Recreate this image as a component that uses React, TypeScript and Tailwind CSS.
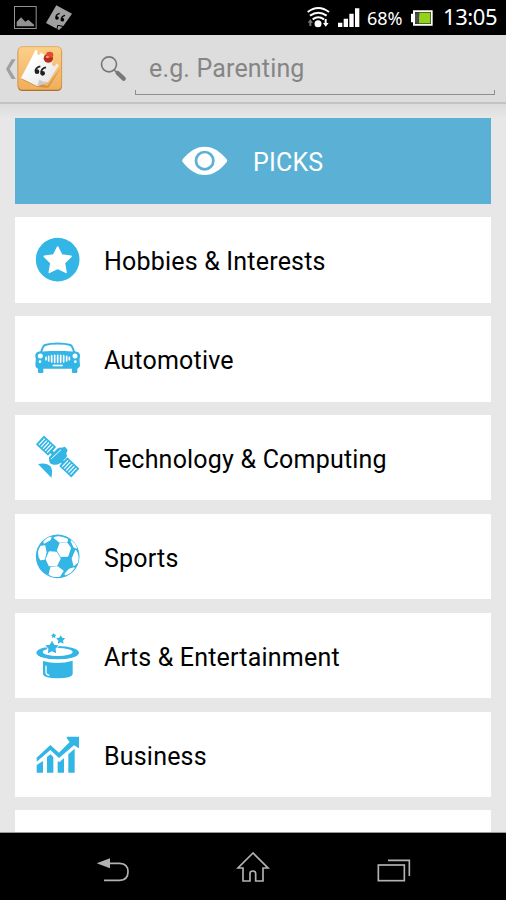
import React from 'react';

const STAR = 'M0 -10 L3.3 -4 L10 -2.9 L5.3 2 L6.3 9 L0 5.8 L-6.3 9 L-5.3 2 L-10 -2.9 L-3.3 -4 Z';

const StarIcon = () => (
  <svg viewBox="105 52 135 135" className="h-[45px] w-[45px]">
    <circle cx="173" cy="120" r="65.5" fill="#33b5e5" />
    <path
      d="M173 82 L185 106 L213 110 L193 130 L198 158 L173 146 L148 158 L153 130 L133 110 L161 106 Z"
      fill="#fff"
      stroke="#fff"
      strokeWidth="5"
      strokeLinejoin="round"
    />
  </svg>
);

const CarIcon = () => (
  <svg viewBox="45 20 135 135" className="h-[45px] w-[45px]">
    <path
      d="M63 72 C66 58 68 50 75 47 C95 41 131 41 151 47 C158 50 160 58 163 72"
      fill="none"
      stroke="#33b5e5"
      strokeWidth="6"
    />
    <path
      d="M62 66 C72 68 82 65 92 65 H134 C144 65 154 68 164 66 C178 67 181 75 180 82 C177 93 180 100 180 108 C180 113 176 116 172 118 V129 Q172 131 169 131 H159 Q156 131 156 128 V118 H70 V128 Q70 131 67 131 H57 Q54 131 54 128 V118 C49 116 46 112 46 107 C46 99 49 92 46 82 C45 74 49 67 62 66 Z"
      fill="#33b5e5"
    />
    <circle cx="61" cy="80" r="7.5" fill="#fff" />
    <circle cx="165" cy="80" r="7.5" fill="#fff" />
    <circle cx="60" cy="97" r="4" fill="#fff" />
    <circle cx="166" cy="97" r="4" fill="#fff" />
    <path
      d="M78 84 V91 M86 81 V95 M95 79 V98 M104 78 V99 M113 78 V99 M122 78 V99 M131 79 V98 M140 81 V95 M148 84 V91"
      stroke="#fff"
      strokeWidth="5"
      strokeLinecap="round"
    />
    <rect x="98" y="106" width="30" height="5" fill="#fff" />
  </svg>
);

const SatelliteIcon = () => (
  <svg viewBox="45 30 135 135" className="h-[45px] w-[45px]">
    <path d="M88 75 L140 122" stroke="#33b5e5" strokeWidth="10" />
    <g transform="translate(78 62) rotate(43)">
      <rect x="-25" y="-18" width="50" height="36" rx="2" fill="#33b5e5" />
      <path d="M-17 -13 V13 M-8.5 -13 V13 M0 -13 V13 M8.5 -13 V13 M17 -13 V13" stroke="#fff" strokeWidth="3.4" />
    </g>
    <g transform="translate(148 127) rotate(43)">
      <rect x="-25" y="-18" width="50" height="36" rx="2" fill="#33b5e5" />
      <path d="M-17 -13 V13 M-8.5 -13 V13 M0 -13 V13 M8.5 -13 V13 M17 -13 V13" stroke="#fff" strokeWidth="3.4" />
    </g>
    <path
      d="M87 97 L110 73 Q116 66 125 68 L135 65 L143 75 L139 85 Q143 93 138 99 L121 114 Q114 121 104 119 Q91 119 88 110 Z"
      fill="#33b5e5"
    />
    <path d="M93 102 L123 74" stroke="#fff" strokeWidth="3" />
    <path d="M54 117 C72 113 85 117 91 124 C97 132 98 143 94 158 Z" fill="#33b5e5" />
  </svg>
);

const BallIcon = () => (
  <svg viewBox="45 27 135 135" className="h-[45px] w-[45px]">
    <circle cx="113" cy="94" r="65.5" fill="#33b5e5" />
    <g fill="#fff" strokeLinejoin="round" stroke="#fff" strokeWidth="4">
      <path d="M88 81 L109 82 L120 101 L110 121 L88 122 L79 103 Z" />
      <path d="M120 56 L140 54 L151 69 L143 93 L123 94 L113 76 Z" />
      <path d="M103 38 Q120 31 142 43 L141 49 L119 51 Z" />
      <path d="M63 64 L74 63 L78 82 L73 102 L62 104 Q50 84 63 64 Z" />
      <path d="M93 127 L113 126 L129 138 L119 153 Q103 157 88 148 Z" />
      <path d="M167 77 Q177 90 172 112 L162 121 L157 101 Z" />
      <path d="M136 146 L148 133 L162 129 Q150 146 136 149 Z" />
      <path d="M72 51 Q81 39 93 37 L90 44 L73 54 Z" />
      <path d="M154 48 Q164 55 169 69 L162 66 Z" />
    </g>
  </svg>
);

const HatIcon = () => (
  <svg viewBox="45 38 135 135" className="h-[45px] w-[45px] overflow-visible">
    <ellipse cx="113" cy="97" rx="64" ry="20" fill="#33b5e5" />
    <ellipse cx="113" cy="95" rx="45" ry="12" fill="#fff" />
    <path d="M69 122 Q113 134 158 121 V162 Q155 174 113 174 Q72 174 69 162 Z" fill="#33b5e5" />
    <path d="M78 136 V158 Q80 164 88 165" fill="none" stroke="#fff" strokeWidth="4" />
    <g fill="#33b5e5">
      <path d={STAR} transform="translate(96 81) scale(2)" stroke="#fff" strokeWidth="2.5" paintOrder="stroke" />
      <path d={STAR} transform="translate(122 58) scale(1.35)" />
      <path d={STAR} transform="translate(101 46) scale(0.8)" />
    </g>
  </svg>
);

const ChartIcon = () => (
  <svg viewBox="45 20 135 135" className="h-[45px] w-[45px]">
    <path d="M50 97 L91 59 L117 82 L149 50 L140 38 V34 H177 V69 L162 60 L117 98 L91 74 L50 109 Z" fill="#33b5e5" />
    <path
      d="M50 119 L69 107 V142 H50 Z M81 95 L91 87 L100 95 V142 H81 Z M113 108 L119 110 L132 98 V142 H113 Z M145 87 L164 70 V142 H145 Z"
      fill="#33b5e5"
    />
  </svg>
);

const categories = [
  { name: 'Hobbies & Interests', icon: <StarIcon /> },
  { name: 'Automotive', icon: <CarIcon /> },
  { name: 'Technology & Computing', icon: <SatelliteIcon /> },
  { name: 'Sports', icon: <BallIcon /> },
  { name: 'Arts & Entertainment', icon: <HatIcon /> },
  { name: 'Business', icon: <ChartIcon /> },
];

const StatusBar = () => (
  <div className="flex h-[35px] shrink-0 items-center justify-between bg-black pl-[14px] pr-2 font-['Noto_Sans',sans-serif] text-white">
    <svg viewBox="42 0 180 105" className="h-[35px] w-[60px]">
      <rect x="43.5" y="19.5" width="65" height="66" fill="none" stroke="#929292" strokeWidth="3" />
      <path d="M50 79 V66 L63 52 L76 65 L85 59 L102 74 V79 Z" fill="#929292" />
      <path d="M169 16 L216 41 L190 78 L177 90 L138 69 Z" fill="#a0a0a0" />
      <path d="M171 88 L173 76 L189 79" fill="none" stroke="#000" strokeWidth="3" />
      <g fill="none" stroke="#000" strokeWidth="4">
        <path d="M179 40 Q168 43 168 52" />
        <path d="M195 46 Q184 49 184 58" />
      </g>
      <circle cx="171" cy="54" r="5.5" />
      <circle cx="187" cy="59" r="5.5" />
    </svg>
    <div className="flex items-center">
      <svg viewBox="51 0 159 105" className="h-[35px] w-[53px]">
        <g fill="none" stroke="#fff" strokeWidth="6">
          <path d="M53 36 Q85 12 117 36" />
          <path d="M60 47 Q85 29 110 47" />
          <path d="M68 58 Q85 46 102 58" />
        </g>
        <circle cx="84" cy="71" r="10.5" fill="#fff" />
        <path d="M61 57 L69 68 H64 V78 H58 V68 H53 Z" fill="#777" />
        <path d="M107 80 L99 69 H104 V57 H110 V69 H116 Z" fill="#fff" />
        <path d="M144 68 H157 V81 H144 Z M161 56 H174 V81 H161 Z M178 41 H191 V81 H178 Z M195 25 H208 V81 H195 Z" fill="#fff" />
      </svg>
      <span className="ml-[7px] w-[36px] whitespace-nowrap text-[18px] leading-[36px] tracking-[-0.1px]">68%</span>
      <svg viewBox="363 0 66 105" className="ml-2 h-[35px] w-[22px]">
        <path d="M369 31 H428 V77 H369 V67 H363 V41 H369 Z" fill="#fff" />
        <rect x="375" y="36" width="48" height="36" fill="#30362c" />
        <rect x="387" y="38" width="34" height="32" fill="#92d21b" />
        <path d="M375 41 L389 36 L385 72 L375 67 Z" fill="#4b5149" />
      </svg>
      <span className="mb-0.5 ml-[10px] w-[55px] whitespace-nowrap text-[22px] leading-[33px] tracking-[-0.4px]">13:05</span>
    </div>
  </div>
);

const AppIcon = () => (
  <svg viewBox="15 105 174 204" className="h-[68px] w-[58px]">
    <defs>
      <linearGradient id="board" x1="0" y1="0" x2="0" y2="1">
        <stop offset="0" stopColor="#fbd08a" />
        <stop offset="1" stopColor="#f1ae5a" />
      </linearGradient>
      <linearGradient id="paper" x1="0" y1="0" x2="1" y2="1">
        <stop offset="0.3" stopColor="#ffffff" />
        <stop offset="1" stopColor="#dedede" />
      </linearGradient>
    </defs>
    <path d="M35 178 H47 L29 207 L47 237 H35 L18 207 Z" fill="#a0a0a0" />
    <rect x="53" y="142" width="133" height="131" rx="14" fill="#a87036" />
    <rect x="54" y="140" width="131" height="129" rx="13" fill="url(#board)" stroke="#d99748" strokeWidth="2" />
    <path d="M62 237 L105 243 L142 259 L182 203 L177 213 L145 263 L112 261 Z" fill="#bb7c3a" opacity="0.6" />
    <path
      d="M107 149 L113 153 Q109 163 117 165 Q123 164 122 157 L159 183 Q153 193 160 199 Q168 199 168 190 L177 196 L145 246 L112 259 L63 234 Z"
      fill="url(#paper)"
    />
    <path d="M112 259 L118 239 Q130 248 145 246 Z" fill="#c9c9c9" />
    <g fill="none" stroke="#202020" strokeWidth="5">
      <path d="M121 199 Q107 202 106 213" />
      <path d="M138 202 Q124 205 123 218" />
    </g>
    <circle cx="111" cy="215" r="7" fill="#202020" />
    <circle cx="128" cy="220" r="7" fill="#202020" />
    <ellipse cx="145" cy="175" rx="14" ry="13" fill="#b92d14" />
    <ellipse cx="149" cy="164" rx="11" ry="9" fill="#e04c30" />
    <ellipse cx="142" cy="171" rx="5" ry="3" fill="#f4a291" />
  </svg>
);

const Header = () => (
  <div className="flex h-[69px] shrink-0 items-start border-b-2 border-[#c3c3c3] bg-[#dddddd] pl-[5px]">
    <AppIcon />
    <svg viewBox="300 105 81 204" className="ml-[37px] h-[68px] w-[27px]">
      <circle cx="327" cy="193" r="22.5" fill="none" stroke="#777" strokeWidth="5" />
      <path d="M343 210 L352 219" stroke="#777" strokeWidth="5" />
      <path d="M353 219 L371 236" stroke="#777" strokeWidth="13" strokeLinecap="round" />
    </svg>
    <div className="ml-2 flex h-[60px] w-[360px] flex-col">
      <div className="h-[55px] pl-[14px] pt-[17px] font-['Roboto',sans-serif] text-[25px] leading-[34px] tracking-[0.16px] text-[#858585]">
        <span>e.g. Parenting</span>
      </div>
      <div className="h-[5px] border-x border-b border-[#8d8d8d]" />
    </div>
  </div>
);

const NavBar = () => (
  <div className="h-[68px] shrink-0 border-t border-[#999] bg-black">
    <svg viewBox="0 96 1518 201" className="h-[67px] w-[506px]" fill="none" stroke="#b2b2b2" strokeWidth="5">
      <path d="M330 187 H359 Q384 188 384 212 Q384 237 359 238 H312" />
      <path d="M290 187 L330 172 V202 Z" fill="#b2b2b2" stroke="none" />
      <path d="M759 156 L714 201 H729 V240 H750 V217 Q750 210 758 210 Q767 210 767 217 V240 H789 V201 H804 Z" />
      <rect x="1135" y="192" width="78" height="47" />
      <path d="M1164 178 H1228 V225" />
    </svg>
  </div>
);

export default function App() {
  return (
    <div className="flex h-[900px] w-[506px] flex-col overflow-hidden bg-[#e7e7e7] font-['Roboto',sans-serif]">
      <StatusBar />
      <Header />
      <div className="flex min-h-0 flex-1 flex-col gap-[13.3px] overflow-hidden bg-gradient-to-b from-[#dcdcdc] to-[#e7e7e7] to-[14px] pl-[15px] pr-[15.4px] pt-[14.2px]">
        <div className="flex h-[85.6px] shrink-0 items-center bg-[#5bb1d5] pl-[167px] text-[25px] text-white">
          <svg viewBox="68 108 138 90" className="h-[30px] w-[46px]">
            <path
              d="M70 148 C90 124 110 110 136 110 C162 110 182 124 202 148 Q205 152 202 156 C182 181 162 195 136 195 C110 195 90 181 70 156 Q67 152 70 148 Z"
              fill="#fff"
            />
            <circle cx="136" cy="152" r="26" fill="none" stroke="#5bb1d5" strokeWidth="8" />
          </svg>
          <span className="ml-[25px] mt-[3px] tracking-[0.2px]">PICKS</span>
        </div>
        {categories.map((category) => (
          <div
            key={category.name}
            className="flex h-[85.6px] shrink-0 items-center gap-6 bg-white pl-5 text-[25px] tracking-[0.2px] text-black"
          >
            {category.icon}
            <span className="mt-1">{category.name}</span>
          </div>
        ))}
        <div className="h-[85.6px] shrink-0 bg-white" />
      </div>
      <NavBar />
    </div>
  );
}
